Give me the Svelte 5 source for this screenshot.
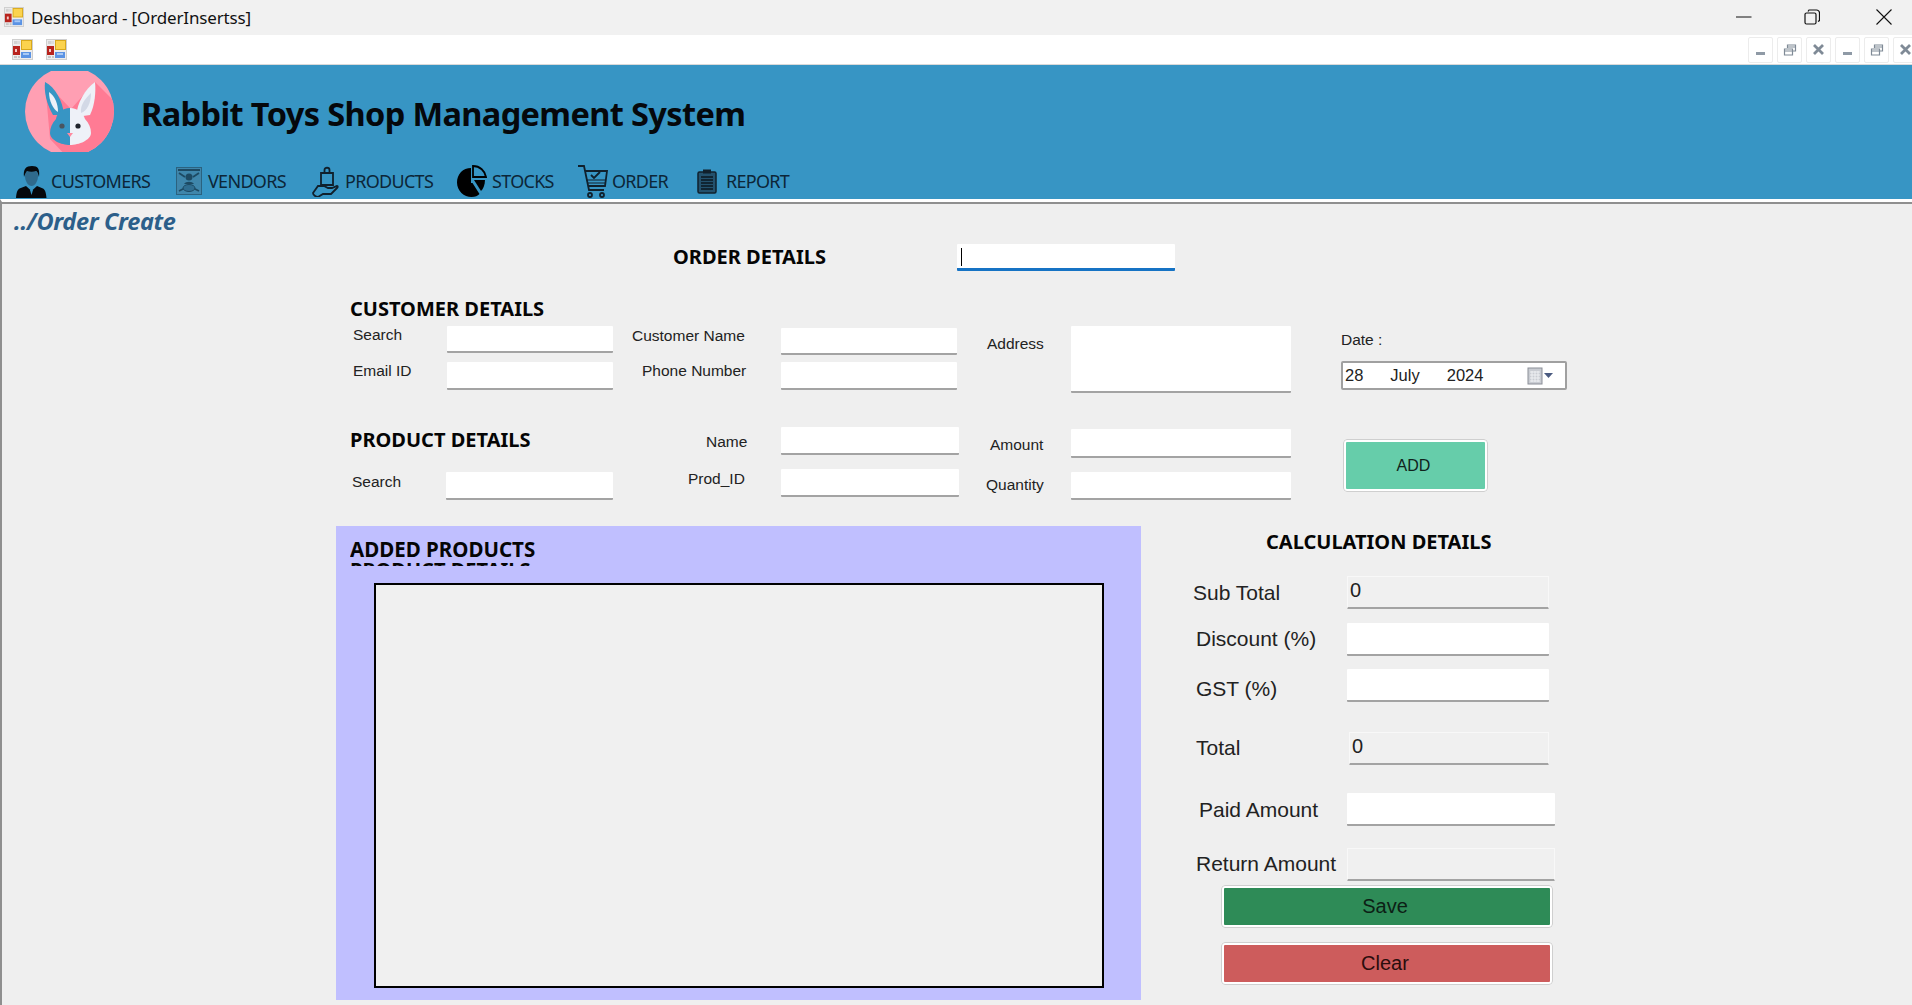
<script>
  const mdiRight = ['min', 'res', 'cls', 'min', 'res', 'cls'];
</script>

{#snippet appIcon(cls)}
  <svg class={cls} viewBox="0 0 21 21" aria-hidden="true">
    <rect width="21" height="21" fill="#cfcfcf"/>
    <rect x="1" y="1" width="19" height="19" fill="#ececec"/>
    <rect x="9" y="1" width="11" height="10" fill="#d9a91c"/>
    <rect x="10" y="2" width="9" height="8" fill="#fbd34e"/>
    <rect x="1" y="7" width="7" height="9" fill="#b8231d"/>
    <rect x="3" y="10" width="2" height="3" fill="#f3c9c6"/>
    <rect x="9" y="13" width="10" height="6" fill="#5b93e4"/>
    <rect x="11" y="14" width="6" height="2" fill="#a9c9f4"/>
    <rect x="2" y="2" width="3" height="3" fill="#d2d2d2"/>
    <rect x="5" y="2" width="3" height="3" fill="#dcdcdc"/>
    <rect x="2" y="17" width="3" height="2" fill="#c6c6c6"/>
    <rect x="6" y="17" width="2" height="2" fill="#c6c6c6"/>
  </svg>
{/snippet}

<div class="window">
  <header class="titlebar">
    {@render appIcon('title-icon')}
    <span class="title-text">Deshboard - [OrderInsertss]</span>
    <div class="win-controls">
      <svg viewBox="0 0 16 16" width="16" height="16"><path d="M0 8h15.5" stroke="#111" stroke-width="1" fill="none"/></svg>
      <svg viewBox="0 0 16 16" width="16" height="16"><path d="M1 5.5a1.5 1.5 0 0 1 1.5-1.5h8a1.5 1.5 0 0 1 1.5 1.5v8a1.5 1.5 0 0 1-1.5 1.5h-8a1.5 1.5 0 0 1-1.5-1.5zM4 2.5l1-1.5h7.5a3 3 0 0 1 3 3v7.5l-1.5 1" stroke="#111" stroke-width="1.2" fill="none"/></svg>
      <svg viewBox="0 0 16 16" width="16" height="16"><path d="M.5.5l15 15M15.5.5l-15 15" stroke="#111" stroke-width="1.1" fill="none"/></svg>
    </div>
  </header>

  <div class="mdistrip">
    {@render appIcon('mdi-icon')}
    {@render appIcon('mdi-icon')}
    <div class="mdi-buttons">
      {#each mdiRight as kind}
        <span class="mdi-btn">
          <svg viewBox="0 0 14 14" width="14" height="14">
            {#if kind === 'min'}
              <rect x="2" y="9" width="9" height="3" fill="#8f9aa6"/>
            {:else if kind === 'res'}
              <path d="M1.5 6h8v6h-8zM1.5 6V8h8V6M4.5 5V2h8v6H10M4.5 2v2h8V2" fill="none" stroke="#7f8a96" stroke-width="1.2"/>
            {:else}
              <path d="M2 2l9 9M11 2l-9 9" stroke="#7f8a96" stroke-width="2.8" fill="none"/>
            {/if}
          </svg>
        </span>
      {/each}
    </div>
  </div>

  <div class="banner">
    <div class="brand">
      <svg class="logo" viewBox="0 0 89 81" aria-hidden="true">
        <defs><clipPath id="disc"><circle cx="44.5" cy="40.5" r="44.5"/></clipPath></defs>
        <g clip-path="url(#disc)">
          <rect width="89" height="81" fill="#ff9fb3"/>
          <path d="M20 11L46 38L70 11L100 41V90H46L25 68Z" fill="#ff7b94"/>
        </g>
        <path d="M20 11C30 16 38 30 39 44L28 44C21 32 19 20 20 11Z" fill="#3795c4"/>
        <path d="M24 21C30 25 33 33 33 41C28 38 24 30 24 21Z" fill="#eef1f8"/>
        <path d="M70 11C60 18 52 32 51 46L65 44C70 34 71 20 70 11Z" fill="#eef1f8"/>
        <path d="M66 22C60 28 55 34 56 42C62 40 66 32 66 22Z" fill="#d3d9e6"/>
        <path d="M45 37C37 37 32 42 31 48C27 52 25 57 25 62C25 69 36 74 45 74Z" fill="#3795c4"/>
        <path d="M45 37C53 37 58 42 60 48C64 52 66 57 66 62C66 69 54 74 45 74Z" fill="#eef1f8"/>
        <circle cx="37" cy="55" r="2.6" fill="#4a5560"/>
        <circle cx="53" cy="55" r="2.6" fill="#20242c"/>
        <path d="M42 62h6l-3 4z" fill="#ff8aa0"/>
      </svg>
      <h1>Rabbit Toys Shop Management System</h1>
    </div>
    <nav>
      <a href="#c">
        <svg viewBox="0 0 31 33" aria-hidden="true"><path d="M15.500 5c4 0 6.500 2.500 6.500 6 0 5-3 10-6.500 10S9 16 9 11c0-3.500 2.500-6 6.500-6z" fill="#2f6a8c"/><path d="M8 12C7 4 10 1 16 1s8 3 7 11c-1-4-2-6-3-6-3 1-6 1-9 0-1 1-2 3-3 6z" fill="#06090c"/><path d="M10 21l5.500 5 5.500-5 6 2.500c2 1 3 4 3.500 9.500H0c.5-5.500 1.500-8.500 3.500-9.500z" fill="#05080c"/><path d="M14 25l1.500 5 1.500-5z" fill="#3795c4"/></svg>
        <span>CUSTOMERS</span>
      </a>
      <a href="#v">
        <svg viewBox="0 0 26 28" aria-hidden="true"><rect x="0.500" y="0.500" width="25" height="27" fill="#3f86ab" stroke="#2b627f"/><path d="M2 3h22M3 6l6 4M23 6l-6 4M3 24l6-3M23 24l-6-3" stroke="#1d4a63" stroke-width="1.800"/><circle cx="13" cy="10" r="3.500" fill="#1d4a63"/><path d="M8 17c2-3 8-3 10 0z" fill="#1d4a63"/><ellipse cx="13" cy="21" rx="6" ry="3.500" fill="#2f6d90" stroke="#1d4a63"/></svg>
        <span>VENDORS</span>
      </a>
      <a href="#p">
        <svg viewBox="0 0 27 31" aria-hidden="true"><g fill="none" stroke="#10202c" stroke-width="1.800"><path d="M9 7h12v12H9zM12.500 7V4c0-3 5-3 5 0v3"/><path d="M1 27l5-7h6l4 2h4l5-2c1 0 1 1 0 2l-6 6h-8l-5 3c-2 0-5-2-5-4z"/></g></svg>
        <span>PRODUCTS</span>
      </a>
      <a href="#s">
        <svg viewBox="0 0 30 33" aria-hidden="true"><path d="M14 3C6 3 0 9 0 17.500S7 32 14.500 32c4 0 6-1 8-3l-7-11H14z" fill="#000"/><path d="M16 12V1c7 0 12 5 13 11z" fill="none" stroke="#000" stroke-width="1.800"/><path d="M17 15h11c0 5-2 9-4 11z" fill="#000"/></svg>
        <span>STOCKS</span>
      </a>
      <a href="#o">
        <svg viewBox="0 0 30 34" aria-hidden="true"><g fill="none" stroke="#10202c" stroke-width="1.800"><path d="M0 2h6l5 24h15"/><path d="M7 7h22l-2 15H10"/><path d="M9 16h18M9 19h18" stroke-width="1.200"/><path d="M13 11l3 3 6-6"/><circle cx="12" cy="31" r="2"/><circle cx="24" cy="31" r="2"/></g></svg>
        <span>ORDER</span>
      </a>
      <a href="#r">
        <svg viewBox="0 0 20 25" aria-hidden="true"><rect x="1" y="3" width="18" height="21" rx="1.500" fill="#23516d" stroke="#10202c" stroke-width="1.500"/><rect x="6" y="0.500" width="8" height="4" fill="#10202c"/><path d="M4 8h12M4 11h12M4 14h12M4 17h12M4 20h12" stroke="#0b1720" stroke-width="1.500"/></svg>
        <span>REPORT</span>
      </a>
    </nav>
  </div>

  <main>
    <p class="crumb">../Order Create</p>

    <div class="order-row">
      <h2>ORDER DETAILS</h2>
      <div class="inp order-id"><i class="caret"></i></div>
    </div>

    <section class="form">
      <h3 class="h-cust">CUSTOMER DETAILS</h3>
      <label class="l l-search1">Search</label><div class="inp i-search1"></div>
      <label class="l l-cname">Customer Name</label><div class="inp i-cname"></div>
      <label class="l l-addr">Address</label><div class="inp i-addr"></div>
      <label class="l l-date">Date :</label>

      <label class="l l-email">Email ID</label><div class="inp i-email"></div>
      <label class="l l-phone">Phone Number</label><div class="inp i-phone"></div>
      <div class="date i-date">
        <span>28</span><span class="m">July</span><span class="y">2024</span>
        <svg viewBox="0 0 26 18" width="26" height="18" aria-hidden="true">
          <rect x="1" y="1" width="14" height="16" fill="#c9ccd2" stroke="#8b8f98"/>
          <path d="M3 5h10M3 8h10M3 11h10M3 14h10M5 4v11M8 4v11M11 4v11" stroke="#eef0f3" stroke-width="1"/>
          <path d="M17 6h9l-4.500 5z" fill="#4b5b80"/>
        </svg>
      </div>

      <h3 class="h-prod">PRODUCT DETAILS</h3>
      <label class="l l-name">Name</label><div class="inp i-name"></div>
      <label class="l l-amount">Amount</label><div class="inp i-amount"></div>
      <button class="btn add">ADD</button>

      <label class="l l-search2">Search</label><div class="inp i-search2"></div>
      <label class="l l-prod">Prod_ID</label><div class="inp i-prod"></div>
      <label class="l l-qty">Quantity</label><div class="inp i-qty"></div>
    </section>

    <section class="lower">
      <div class="panel">
        <div class="panel-head"><h3>ADDED PRODUCTS</h3><h3 class="ghost">PRODUCT DETAILS</h3></div>
        <div class="grid-box"></div>
      </div>

      <div class="calc">
        <h3 class="calc-title">CALCULATION DETAILS</h3>
        <div class="calc-grid">
          <label class="cl c1">Sub Total</label><div class="inp ro ci1">0</div>
          <label class="cl c2">Discount (%)</label><div class="inp ci2"></div>
          <label class="cl c3">GST (%)</label><div class="inp ci3"></div>
          <label class="cl c4">Total</label><div class="inp ro ci4">0</div>
          <label class="cl c5">Paid Amount</label><div class="inp ci5"></div>
          <label class="cl c6">Return Amount</label><div class="inp ro ci6"></div>
        </div>
        <button class="btn big save">Save</button>
        <button class="btn big clear">Clear</button>
      </div>
    </section>
  </main>
</div>

<style>
  :global(body) { margin: 0; background: #efefef; overflow: hidden; }
  .window { width: 1912px; height: 1005px; overflow: hidden; display: flex; flex-direction: column; font-family: "Liberation Sans", Arial, sans-serif; color: #1a1a1a; }

  .titlebar { height: 35px; flex: none; background: #f1f1f1; display: flex; align-items: center; padding-left: 4px; box-sizing: border-box; }
  .title-icon { width: 20px; height: 20px; margin-top: -1px; }
  .title-text { margin-left: 7px; font: 17px "Noto Sans", sans-serif; letter-spacing: -0.15px; color: #111; margin-top: -1px; }
  .win-controls { margin-left: auto; display: flex; gap: 54px; padding-right: 20px; margin-top: -2px; }
  .win-controls svg:nth-child(2) { transform: translateX(-2px); }

  .mdistrip { height: 29px; flex: none; background: #fff; display: flex; align-items: center; border-bottom: 1px solid #d9d9d9; padding-left: 12px; gap: 13px; }
  .mdi-icon { width: 21px; height: 21px; margin-top: -1px; }
  .mdi-buttons { margin-left: auto; display: flex; gap: 4px; margin-right: -6px; }
  .mdi-btn { width: 23px; height: 24px; border: 1px solid #ececec; border-radius: 2px; display: flex; align-items: center; justify-content: center; }

  .banner { height: 134px; flex: none; background: #3795c4; display: flex; flex-direction: column; box-sizing: border-box; }
  .brand { display: flex; align-items: center; height: 98px; padding: 0 0 0 25px; }
  .logo { width: 89px; height: 81px; margin-top: -6px; }
  h1 { margin: -1px 0 0 27px; font: 700 32.5px "Noto Sans", sans-serif; letter-spacing: -0.62px; color: #05080c; }
  nav { display: flex; padding-left: 16px; }
  nav a { display: flex; align-items: center; height: 36px; text-decoration: none; color: #0c2638; font: 18px "Noto Sans", sans-serif; letter-spacing: -0.7px; }
  nav svg { display: block; flex: none; }
  nav a:nth-child(1) { width: 160px; } nav a:nth-child(1) svg { width: 31px; height: 33px; margin-right: 4px; }
  nav a:nth-child(2) { width: 136px; } nav a:nth-child(2) svg { width: 26px; height: 28px; margin-right: 6px; }
  nav a:nth-child(3) { width: 145px; } nav a:nth-child(3) svg { width: 27px; height: 31px; margin-right: 6px; }
  nav a:nth-child(4) { width: 121px; } nav a:nth-child(4) svg { width: 30px; height: 33px; margin-right: 5px; }
  nav a:nth-child(5) { width: 119px; } nav a:nth-child(5) svg { width: 30px; height: 34px; margin-right: 4px; }
  nav a:nth-child(6) svg { width: 20px; height: 25px; margin-right: 9px; }

  main { flex: 1; min-height: 0; background: #efefef; border-top: 3px solid #fff; position: relative; box-sizing: border-box; }
  main::before { content: ""; display: block; height: 2px; background: #8f8f8f; }
  main { border-left: 2px solid #8f8f8f; }
  .crumb { margin: 0; height: 40px; padding: 1px 0 0 12px; box-sizing: border-box; font: italic 700 23.5px "Noto Sans", sans-serif; letter-spacing: -0.35px; color: #2c5f8a; }

  h2, h3 { margin: 0; font: 700 20px "Noto Sans", sans-serif; letter-spacing: 0; color: #050505; line-height: 26px; white-space: nowrap; }
  .order-row { display: flex; padding-left: 671px; height: 52px; box-sizing: border-box; }
  .order-row h2 { width: 284px; padding-top: 0; }
  .inp { background: #fff; border-bottom: 2px solid #a3a3a3; border-radius: 1px; box-sizing: border-box; }
  .order-id { width: 218px; height: 27px; border-bottom: 3px solid #1673c4; position: relative; }
  .caret { position: absolute; left: 4px; top: 4px; width: 1px; height: 18px; background: #000; }

  .form {
    display: grid;
    margin-left: 348px;
    grid-template-columns: 97px 166px 168px 178px 112px 220px 50px 226px;
    grid-template-rows: 30px 33px 34px 34px 35px 38px;
    align-items: start;
    justify-items: start;
    font-size: 15.5px;
    color: #222;
  }
  .l { white-space: nowrap; line-height: 18px; }
  .form .inp { width: 100%; }
  .h-cust { grid-area: 1 / 1 / 2 / 4; }
  .l-search1 { grid-area: 2 / 1; margin: 0 0 0 3px; }
  .i-search1 { grid-area: 2 / 2; height: 27px; }
  .l-cname { grid-area: 2 / 3; margin: 1px 0 0 19px; }
  .i-cname { grid-area: 2 / 4; height: 27px; margin-top: 2px; width: 176px !important; }
  .l-addr { grid-area: 2 / 5; margin: 9px 0 0 28px; }
  .i-addr { grid-area: 2 / 6 / 4 / 7; height: 67px; }
  .l-date { grid-area: 2 / 8; margin: 5px 0 0 0; }
  .l-email { grid-area: 3 / 1; margin: 3px 0 0 3px; }
  .i-email { grid-area: 3 / 2; height: 28px; margin-top: 3px; }
  .l-phone { grid-area: 3 / 3; margin: 3px 0 0 29px; }
  .i-phone { grid-area: 3 / 4; height: 28px; margin-top: 3px; width: 176px !important; }
  .i-date { grid-area: 3 / 8; margin-top: 2px; }
  .h-prod { grid-area: 5 / 1 / 6 / 3; margin-top: 0; }
  .l-name { grid-area: 5 / 3; margin: 6px 0 0 93px; }
  .i-name { grid-area: 5 / 4; height: 28px; }
  .l-amount { grid-area: 5 / 5; margin: 9px 0 0 31px; }
  .i-amount { grid-area: 5 / 6; height: 29px; margin-top: 2px; }
  .add { grid-area: 5 / 8 / 7 / 9; margin: 12px 0 0 2px; width: 145px; height: 53px; font-size: 16px; --fill: #66cdaa; }
  .l-search2 { grid-area: 6 / 1; margin: 11px 0 0 2px; }
  .i-search2 { grid-area: 6 / 2; height: 28px; margin-top: 10px; margin-left: -1px; width: 167px !important; }
  .l-prod { grid-area: 6 / 3; margin: 8px 0 0 75px; }
  .i-prod { grid-area: 6 / 4; height: 28px; margin-top: 7px; }
  .l-qty { grid-area: 6 / 5; margin: 14px 0 0 27px; }
  .i-qty { grid-area: 6 / 6; height: 28px; margin-top: 10px; }

  .date { width: 226px; height: 29px; box-sizing: border-box; background: #fff; border: 2px solid #a0a0a0; border-radius: 2px; display: flex; align-items: center; padding: 0 12px 0 2px; font-size: 16.5px; }
  .date .m { margin-left: 27px; }
  .date .y { margin-left: 27px; }
  .date svg { margin-left: auto; }

  .btn { box-sizing: border-box; display: block; border: 3px solid #fff; background: var(--fill); outline: 1px solid #cfcfcf; outline-offset: -1px; border-radius: 4px; font-family: "Liberation Sans", sans-serif; color: #10231c; padding: 0 4px 0 0; }

  .lower { display: flex; margin: 26px 0 0 334px; }
  .panel { width: 805px; height: 474px; background: #c0bfff; flex: none; box-sizing: border-box; padding: 12px 0 0 14px; }
  .panel-head { height: 28px; overflow: hidden; }
  .panel-head h3 { font-size: 20.5px; height: 23px; line-height: 23px; }
  .panel-head .ghost { font-size: 20px; margin-top: -3px; }
  .grid-box { margin: 17px 0 0 24px; width: 730px; height: 405px; background: #f0f0f0; border: 2px solid #000; box-sizing: border-box; }

  .calc { position: relative; flex: 1; }
  .calc-title { margin: 3px 0 0 125px; }
  .calc-grid {
    display: grid;
    margin: 21px 0 0 52px;
    grid-template-columns: 154px 208px;
    grid-template-rows: 47px 46px 63px 62px 54px 37px;
    align-items: start;
    justify-items: start;
    font-size: 21px;
    color: #222;
  }
  .cl { white-space: nowrap; line-height: 24px; margin-top: 6px; margin-left: 3px; }
  .calc-grid .inp { height: 33px; width: 202px; font-size: 20px; padding: 0 0 0 2px; line-height: 26px; }
  .ro { background: #f0f0f0; border: 1px solid #f8f8f8; border-bottom: 2px solid #a3a3a3; }
  .c1 { margin-left: 0; margin-top: 5px; }
  .c2 { margin-top: 4px; }
  .c3 { margin-top: 8px; }
  .c4 { margin-top: 4px; }
  .c5 { margin-left: 6px; margin-top: 4px; }
  .c6 { margin-top: 4px; }
  .ci4 { margin-left: 2px; width: 200px !important; }
  .ci5, .ci6 { width: 208px !important; }
  .ci5 { margin-top: -1px; }
  .big { width: 332px; height: 43px; margin-left: 80px; font-size: 20px; }
  .save { --fill: #2e8b57; color: #0c2015; }
  .clear { --fill: #cd5c5c; color: #2a0d0d; margin-top: 14px; }
</style>
